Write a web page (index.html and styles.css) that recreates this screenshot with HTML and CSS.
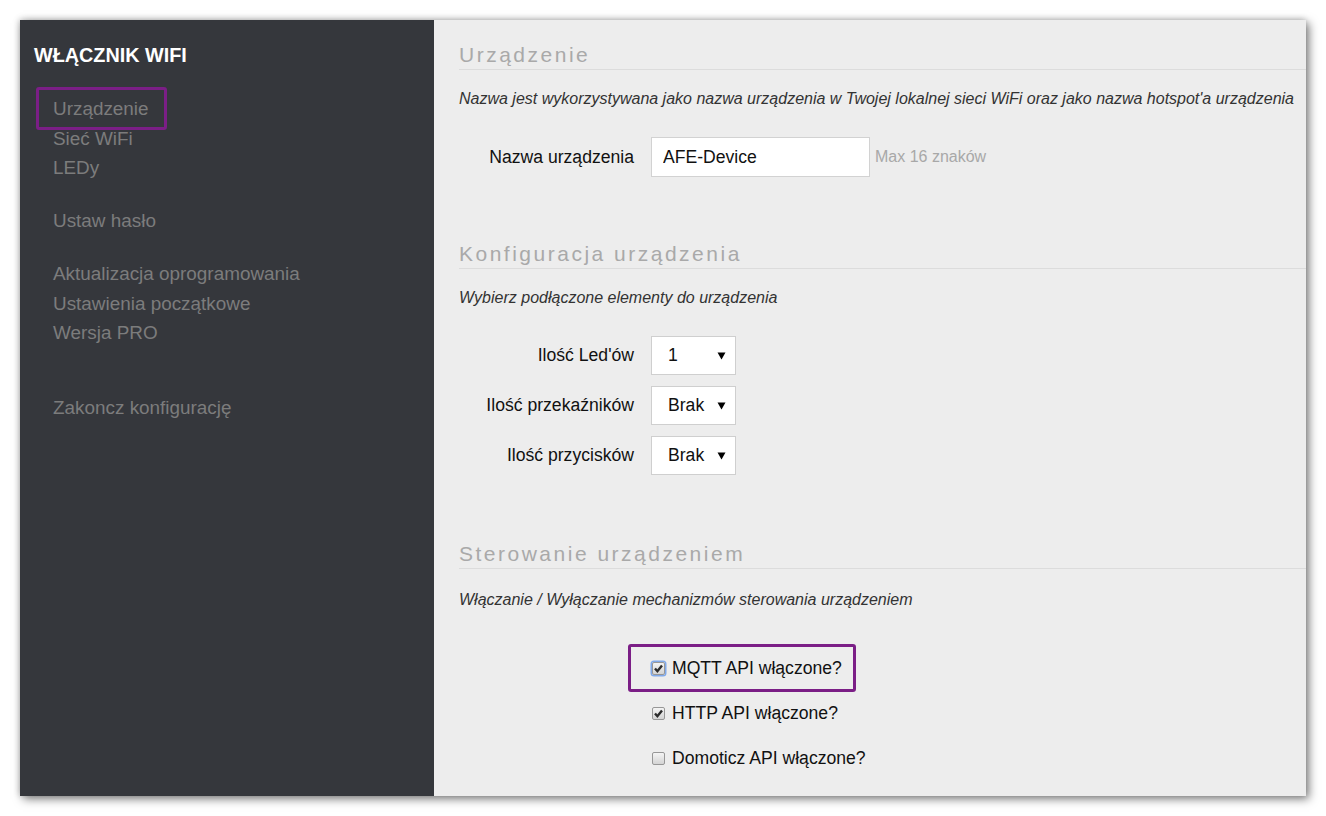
FILE: index.html
```html
<!DOCTYPE html>
<html lang="pl">
<head>
<meta charset="utf-8">
<title>Włącznik WiFi</title>
<link rel="stylesheet" href="styles.css">
</head>
<body>
<div class="frame">
  <aside class="sidebar">
    <div class="brand">WŁĄCZNIK WIFI</div>
    <ul class="nav">
      <li class="nav-item marked">Urządzenie<span class="mark mark-nav"></span></li>
      <li class="nav-item">Sieć WiFi</li>
      <li class="nav-item">LEDy</li>
      <li class="nav-item group">Ustaw hasło</li>
      <li class="nav-item group">Aktualizacja oprogramowania</li>
      <li class="nav-item">Ustawienia początkowe</li>
      <li class="nav-item">Wersja PRO</li>
      <li class="nav-item group-far">Zakoncz konfigurację</li>
    </ul>
  </aside>
  <main class="main">
    <section class="section">
      <h2 class="section-title">Urządzenie</h2>
      <p class="section-desc">Nazwa jest wykorzystywana jako nazwa urządzenia w Twojej lokalnej sieci WiFi oraz jako nazwa hotspot'a urządzenia</p>
      <div class="rows rows-first">
        <div class="row">
          <label class="row-label" for="name">Nazwa urządzenia</label>
          <div class="row-control">
            <input id="name" class="text-input" type="text" value="AFE-Device">
            <span class="hint">Max 16 znaków</span>
          </div>
        </div>
      </div>
    </section>

    <section class="section section-next">
      <h2 class="section-title">Konfiguracja urządzenia</h2>
      <p class="section-desc">Wybierz podłączone elementy do urządzenia</p>
      <div class="rows rows-first">
        <div class="row row-select">
          <span class="row-label">Ilość Led'ów</span>
          <div class="row-control">
            <div class="select"><span>1</span><svg class="arrow" width="9" height="8" viewBox="0 0 9 8"><path d="M0.5 0.5 L8.5 0.5 L4.5 7.5 Z" fill="#000"/></svg></div>
          </div>
        </div>
        <div class="row row-select">
          <span class="row-label">Ilość przekaźników</span>
          <div class="row-control">
            <div class="select"><span>Brak</span><svg class="arrow" width="9" height="8" viewBox="0 0 9 8"><path d="M0.5 0.5 L8.5 0.5 L4.5 7.5 Z" fill="#000"/></svg></div>
          </div>
        </div>
        <div class="row row-select">
          <span class="row-label">Ilość przycisków</span>
          <div class="row-control">
            <div class="select"><span>Brak</span><svg class="arrow" width="9" height="8" viewBox="0 0 9 8"><path d="M0.5 0.5 L8.5 0.5 L4.5 7.5 Z" fill="#000"/></svg></div>
          </div>
        </div>
      </div>
    </section>

    <section class="section section-next section-last">
      <h2 class="section-title">Sterowanie urządzeniem</h2>
      <p class="section-desc">Włączanie / Wyłączanie mechanizmów sterowania urządzeniem</p>
      <div class="checks">
        <div class="check-row">
          <span class="checkbox checked focused"><svg width="13" height="13" viewBox="0 0 13 13"><path d="M3 6.5 L5.4 9.2 L10 3.4" fill="none" stroke="#2b2b2b" stroke-width="2.4"/></svg></span>
          <span class="check-label">MQTT API włączone?</span>
          <span class="mark mark-check"></span>
        </div>
        <div class="check-row">
          <span class="checkbox checked"><svg width="13" height="13" viewBox="0 0 13 13"><path d="M3 6.5 L5.4 9.2 L10 3.4" fill="none" stroke="#2b2b2b" stroke-width="2.4"/></svg></span>
          <span class="check-label">HTTP API włączone?</span>
        </div>
        <div class="check-row">
          <span class="checkbox"></span>
          <span class="check-label">Domoticz API włączone?</span>
        </div>
      </div>
    </section>
  </main>
</div>
</body>
</html>
```

FILE: styles.css
```css
html, body {
  margin: 0;
  padding: 0;
  background: #ffffff;
}

body {
  font-family: "Liberation Sans", Arial, sans-serif;
  padding: 20px;
  width: 1286px;
  height: 776px;
}

.frame {
  display: flex;
  width: 1286px;
  height: 776px;
  box-shadow: 3px 3px 9px rgba(0, 0, 0, 0.5), -1px -1px 6px rgba(0, 0, 0, 0.18);
}

/* Sidebar */
.sidebar {
  width: 414px;
  flex: none;
  background: #35373c;
  padding: 23px 0 0 14px;
  box-sizing: border-box;
}

.brand {
  color: #ffffff;
  font-weight: bold;
  font-size: 19.8px;
  line-height: 24px;
}

.nav {
  list-style: none;
  margin: 27px 0 0 0;
  padding: 0 0 0 19px;
}

.nav-item {
  position: relative;
  color: #7c7c7c;
  font-size: 18.9px;
  line-height: 29.5px;
}

.nav-item.group {
  margin-top: 23.5px;
}

.nav-item.group-far {
  margin-top: 45.5px;
}

.mark {
  position: absolute;
  border: 3px solid #7b1e86;
  border-radius: 3px;
  box-sizing: border-box;
}

.mark-nav {
  left: -17px;
  top: -7px;
  width: 131px;
  height: 43px;
}

/* Main */
.main {
  flex: 1;
  background: #ededed;
  padding: 21px 0 0 25px;
  box-sizing: border-box;
  color: #111;
}

.section-title {
  margin: 0;
  font-size: 21px;
  font-weight: normal;
  letter-spacing: 2.5px;
  color: #a9a9a9;
  line-height: 28px;
  border-bottom: 1px solid #dcdcdc;
}

.section-next {
  margin-top: 63px;
}

.section-last {
  margin-top: 65px;
}

.section-desc {
  margin: 19px 0 0 0;
  font-size: 16px;
  font-style: italic;
  line-height: 20px;
  color: #333;
}

.section-last .section-desc {
  margin-top: 21px;
}

.rows-first {
  margin-top: 28px;
}

.row {
  display: grid;
  grid-template-columns: 175px auto;
  column-gap: 17px;
  align-items: center;
}

.row-select + .row-select {
  margin-top: 11px;
}

.row-label {
  text-align: right;
  font-size: 17.6px;
  color: #111;
}

.row-control {
  display: flex;
  align-items: center;
  gap: 5px;
}

.text-input {
  width: 219px;
  height: 40px;
  box-sizing: border-box;
  border: 1px solid #d2d2d2;
  background: #fff;
  padding: 0 11px;
  font-family: "Liberation Sans", Arial, sans-serif;
  font-size: 17.6px;
  color: #111;
  outline: none;
  margin: 0;
}

.hint {
  font-size: 16px;
  color: #a8a8a8;
}

.select {
  width: 85px;
  height: 39px;
  box-sizing: border-box;
  border: 1px solid #cfcfcf;
  background: #fff;
  display: flex;
  align-items: center;
  justify-content: space-between;
  padding: 0 9px 0 16px;
  font-size: 17.6px;
  color: #111;
}

.arrow {
  display: block;
}

/* Checkboxes */
.checks {
  margin-top: 47px;
  padding-left: 193px;
}

.check-row {
  position: relative;
  display: flex;
  align-items: center;
  height: 22px;
}

.check-row + .check-row {
  margin-top: 23px;
}

.checkbox {
  width: 13px;
  height: 13px;
  box-sizing: border-box;
  border: 1px solid #979797;
  border-radius: 2px;
  background: linear-gradient(#f4f4f4, #d4d4d4);
  display: flex;
  align-items: center;
  justify-content: center;
  margin-right: 7px;
}

.checkbox svg {
  display: block;
  margin: -1px;
}

.checkbox.focused {
  box-shadow: 0 0 0 1.5px #80a9ea;
}

.check-label {
  font-size: 17.6px;
  color: #111;
}

.mark-check {
  left: -24px;
  top: -13px;
  width: 228px;
  height: 48px;
}
```
